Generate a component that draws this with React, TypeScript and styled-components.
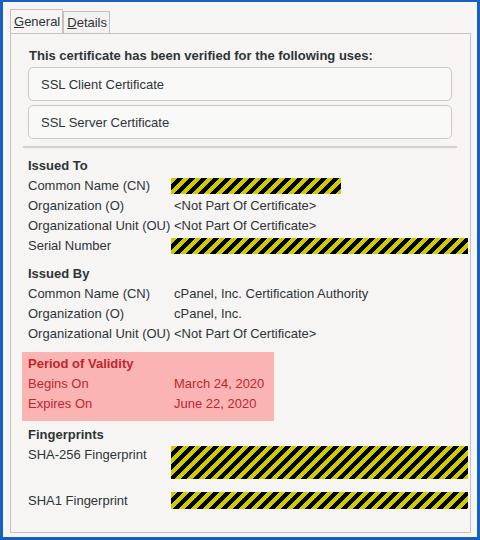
import React from "react";
import styled, { createGlobalStyle, css } from "styled-components";

const GlobalStyle = createGlobalStyle`
  html, body { margin: 0; padding: 0; }
  body {
    font-family: "Liberation Sans", Arial, sans-serif;
    font-size: 13px;
    color: #2e3436;
  }
`;

const Frame = styled.div`
  width: 480px;
  height: 540px;
  box-sizing: border-box;
  border: 3px solid #1660bf;
  border-top-width: 2px;
  background: #f6f5f4;
  padding: 7px 6px 4px 7px;
  display: flex;
  flex-direction: column;
`;

const TabBar = styled.div`
  display: flex;
  align-items: flex-end;
  height: 24px;
`;

const Tab = styled.div<{ $active?: boolean }>`
  box-sizing: border-box;
  height: ${(p) => (p.$active ? 24 : 22)}px;
  border: 1px solid #c6c1bb;
  border-bottom: none;
  padding: 0 2px 0 3px;
  display: flex;
  align-items: center;
  line-height: 15px;
  background: ${(p) => (p.$active ? "#f6f5f4" : "#f3f2f1")};
  u { text-decoration: underline; text-underline-offset: 1px; }
`;

const Panel = styled.div`
  flex: 1;
  border: 1px solid #c6c1bb;
  padding: 0 2px 0 11px;
  display: flex;
  flex-direction: column;
`;

const UsesHeading = styled.div`
  margin-top: 14px;
  padding-left: 7px;
  font-weight: bold;
  line-height: 16px;
`;

const UsesList = styled.div`
  display: flex;
  flex-direction: column;
  gap: 4px;
  margin: 3px 16px 0 6px;
`;

const UseBox = styled.div`
  box-sizing: border-box;
  height: 34px;
  border: 1px solid #cdc7c2;
  border-radius: 5px;
  background: #f9f9f8;
  padding-left: 12px;
  display: flex;
  align-items: center;
`;

const Separator = styled.div`
  height: 2px;
  background: #d3cfca;
  margin: 7px 11px 0 1px;
`;

const Section = styled.div<{ $highlight?: boolean; $top: number }>`
  display: grid;
  grid-template-columns: 143px 1fr;
  line-height: 20px;
  margin-top: ${(p) => p.$top}px;
  padding: 0 0 8px 6px;
  ${(p) =>
    p.$highlight &&
    css`
      grid-template-columns: 143px auto;
      width: fit-content;
      background: #fbb4b4;
      color: #c0262d;
      padding: 2px 10px 7px 6px;
    `}
`;

const SectionTitle = styled.div`
  grid-column: 1 / -1;
  font-weight: bold;
`;

const Label = styled.div`
  white-space: nowrap;
`;

const Value = styled.div`
  padding-left: 3px;
  white-space: nowrap;
`;

const Redacted = styled.div<{ $h: number; $w?: number; $top?: number }>`
  height: ${(p) => p.$h}px;
  width: ${(p) => (p.$w ? `${p.$w}px` : "auto")};
  margin-top: ${(p) => p.$top ?? 2}px;
  background: repeating-linear-gradient(
    135deg,
    #cccc00 0 4.25px,
    #000 4.25px 8.5px
  );
`;

const Spacer = styled.div<{ $h: number }>`
  grid-column: 1 / -1;
  height: ${(p) => p.$h}px;
`;

export default function App() {
  return (
    <>
      <GlobalStyle />
      <Frame>
        <TabBar>
          <Tab $active>
            <span>
              <u>G</u>eneral
            </span>
          </Tab>
          <Tab>
            <span>
              <u>D</u>etails
            </span>
          </Tab>
        </TabBar>
        <Panel>
          <UsesHeading>This certificate has been verified for the following uses:</UsesHeading>
          <UsesList>
            <UseBox>SSL Client Certificate</UseBox>
            <UseBox>SSL Server Certificate</UseBox>
          </UsesList>
          <Separator />

          <Section $top={8}>
            <SectionTitle>Issued To</SectionTitle>
            <Label>Common Name (CN)</Label>
            <Redacted $h={16} $w={170} />
            <Label>Organization (O)</Label>
            <Value>&lt;Not Part Of Certificate&gt;</Value>
            <Label>Organizational Unit (OU)</Label>
            <Value>&lt;Not Part Of Certificate&gt;</Value>
            <Label>Serial Number</Label>
            <Redacted $h={16} />
          </Section>

          <Section $top={0}>
            <SectionTitle>Issued By</SectionTitle>
            <Label>Common Name (CN)</Label>
            <Value>cPanel, Inc. Certification Authority</Value>
            <Label>Organization (O)</Label>
            <Value>cPanel, Inc.</Value>
            <Label>Organizational Unit (OU)</Label>
            <Value>&lt;Not Part Of Certificate&gt;</Value>
          </Section>

          <Section $highlight $top={0}>
            <SectionTitle>Period of Validity</SectionTitle>
            <Label>Begins On</Label>
            <Value>March 24, 2020</Value>
            <Label>Expires On</Label>
            <Value>June 22, 2020</Value>
          </Section>

          <Section $top={4}>
            <SectionTitle>Fingerprints</SectionTitle>
            <Label>SHA-256 Fingerprint</Label>
            <Redacted $h={33} $top={1} />
            <Spacer $h={12} />
            <Label>SHA1 Fingerprint</Label>
            <Redacted $h={17} $top={1} />
          </Section>
        </Panel>
      </Frame>
    </>
  );
}
